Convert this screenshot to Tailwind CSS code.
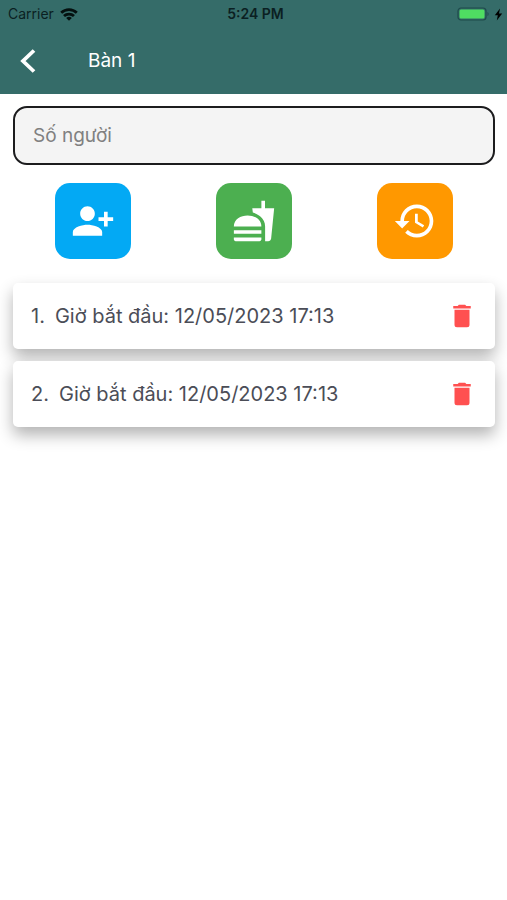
<!DOCTYPE html>
<html lang="vi">
<head>
    <meta charset="UTF-8">
    <meta name="viewport" content="width=device-width, initial-scale=1.0">
    <title>Bàn 1</title>
    <script src="https://cdn.jsdelivr.net/npm/@tailwindcss/browser@4"></script>
</head>
<body class="min-h-screen bg-white font-['Inter',sans-serif] text-[#4b4d57]">
    <header class="bg-[#356c69]">
        <!-- Status bar -->
        <div class="grid grid-cols-3 items-center h-7 pl-2 pr-1 text-[#0b1f22]">
            <div class="flex items-center gap-1.5 text-sm">
                <span>Carrier</span>
                <svg class="w-[18px] h-[13px]" viewBox="0 0 18 13" fill="none" stroke="#04100f" stroke-width="2.8">
                    <path d="M1.2 4.8a11.2 11.2 0 0 1 15.6 0"/>
                    <path d="M4 8.1a7.2 7.2 0 0 1 10 0"/>
                    <path d="M9 12.8 6.2 10.100a4 4 0 0 1 5.6 0z" fill="#04100f" stroke="none"/>
                </svg>
            </div>
            <span class="text-center text-sm font-semibold">5:24 PM</span>
            <div class="flex items-center justify-end gap-1">
                <svg class="w-[33px] h-[14px]" viewBox="0 0 33 14">
                    <rect x="1" y="1" width="28" height="12" rx="3" fill="none" stroke="#1f4a4b" stroke-width="1.2"/>
                    <rect x="2.5" y="2.5" width="25" height="9" rx="1.5" fill="#4fdd62"/>
                    <path d="M30.5 5c1.4.4 1.4 3.600 0 4z" fill="#1f4a4b"/>
                </svg>
                <svg class="w-[9px] h-[13px]" viewBox="0 0 9 13" fill="#000">
                    <path d="M6 .5.8 7.300h3L2.800 12.500 8.200 5.600H5z"/>
                </svg>
            </div>
        </div>
        <!-- Title bar -->
        <div class="flex items-center gap-12 h-[66px] px-4 text-white">
            <button type="button" aria-label="Quay lại" class="flex justify-center w-6">
                <svg class="w-4 h-6" viewBox="0 0 16 24" fill="none" stroke="currentColor" stroke-width="3.800">
                    <path d="M14 1.500 3 12l11 10.500"/>
                </svg>
            </button>
            <h1 class="text-[19px]">Bàn 1</h1>
        </div>
    </header>

    <main class="pl-[13px] pr-3 pt-3">
        <input type="text" aria-label="Số người" placeholder="Số người"
            class="block w-full h-[59px] px-[18px] text-[19px] placeholder:text-[#808080] bg-[#f4f4f4] border-2 border-[#1c1c1e] rounded-[14px] focus:outline-none">

        <!-- Actions -->
        <div class="flex justify-around mt-[18px]">
            <button type="button" aria-label="Thêm người" class="flex items-center justify-center size-[76px] rounded-[15px] bg-[#03a9f4] text-white">
                <svg class="size-11" viewBox="0 0 24 24" fill="currentColor">
                    <path d="M13 8c0-2.210-1.790-4-4-4S5 5.790 5 8s1.790 4 4 4 4-1.790 4-4zm2 2v2h3v3h2v-3h3v-2h-3V7h-2v3h-3zM1 18v2h16v-2c0-2.660-5.330-4-8-4s-8 1.340-8 4z"/>
                </svg>
            </button>
            <button type="button" aria-label="Gọi món" class="flex items-center justify-center size-[76px] rounded-[15px] bg-[#4caf50] text-white">
                <svg class="size-11" viewBox="0 0 24 24" fill="currentColor">
                    <path d="M18.060 22.990h1.660c.84 0 1.530-.64 1.630-1.460L23 5.050h-5V1h-1.970v4.050h-4.970l.3 2.340c1.710.47 3.310 1.320 4.270 2.260 1.440 1.420 2.430 2.890 2.430 5.290v8.050zM1 21.990V21h15.030v.99c0 .55-.45 1-1.010 1H2.010c-.56 0-1.010-.45-1.010-1zM16.030 14.990c0-8-15.030-8-15.030 0h15.030zM1.020 17h15v2h-15z"/>
                </svg>
            </button>
            <button type="button" aria-label="Lịch sử" class="flex items-center justify-center size-[76px] rounded-[15px] bg-[#ff9800] text-white">
                <svg class="size-11" viewBox="0 0 24 24" fill="currentColor">
                    <path d="M13 3c-4.970 0-9 4.030-9 9H1l3.890 3.890.07.14L9 12H6c0-3.870 3.130-7 7-7s7 3.130 7 7-3.130 7-7 7c-1.930 0-3.680-.79-4.940-2.060l-1.420 1.420C8.270 19.990 10.510 21 13 21c4.970 0 9-4.030 9-9s-4.030-9-9-9zm-1 5v5l4.280 2.540.72-1.210-3.500-2.080V8H12z"/>
                </svg>
            </button>
        </div>

        <!-- Sessions -->
        <ul class="flex flex-col gap-3 mt-6">
            <li class="flex items-center justify-between h-[66px] px-[18px] bg-white rounded-[5px] shadow-[0_8px_16px_rgba(0,0,0,0.3)]">
                <p class="flex gap-2.5 text-xl"><span>1.</span><span>Giờ bắt đầu: 12/05/2023 17:13</span></p>
                <button type="button" aria-label="Xóa 1" class="text-[#ff5050]">
                    <svg class="size-[30px]" viewBox="0 0 24 24" fill="currentColor">
                        <path d="M19 4h-3.500l-1-1h-5l-1 1H5v2h14zM6 19a2 2 0 0 0 2 2h8a2 2 0 0 0 2-2V7H6z"/>
                    </svg>
                </button>
            </li>
            <li class="flex items-center justify-between h-[66px] px-[18px] bg-white rounded-[5px] shadow-[0_8px_16px_rgba(0,0,0,0.3)]">
                <p class="flex gap-2.5 text-xl"><span>2.</span><span>Giờ bắt đầu: 12/05/2023 17:13</span></p>
                <button type="button" aria-label="Xóa 2" class="text-[#ff5050]">
                    <svg class="size-[30px]" viewBox="0 0 24 24" fill="currentColor">
                        <path d="M19 4h-3.500l-1-1h-5l-1 1H5v2h14zM6 19a2 2 0 0 0 2 2h8a2 2 0 0 0 2-2V7H6z"/>
                    </svg>
                </button>
            </li>
        </ul>
    </main>
</body>
</html>
